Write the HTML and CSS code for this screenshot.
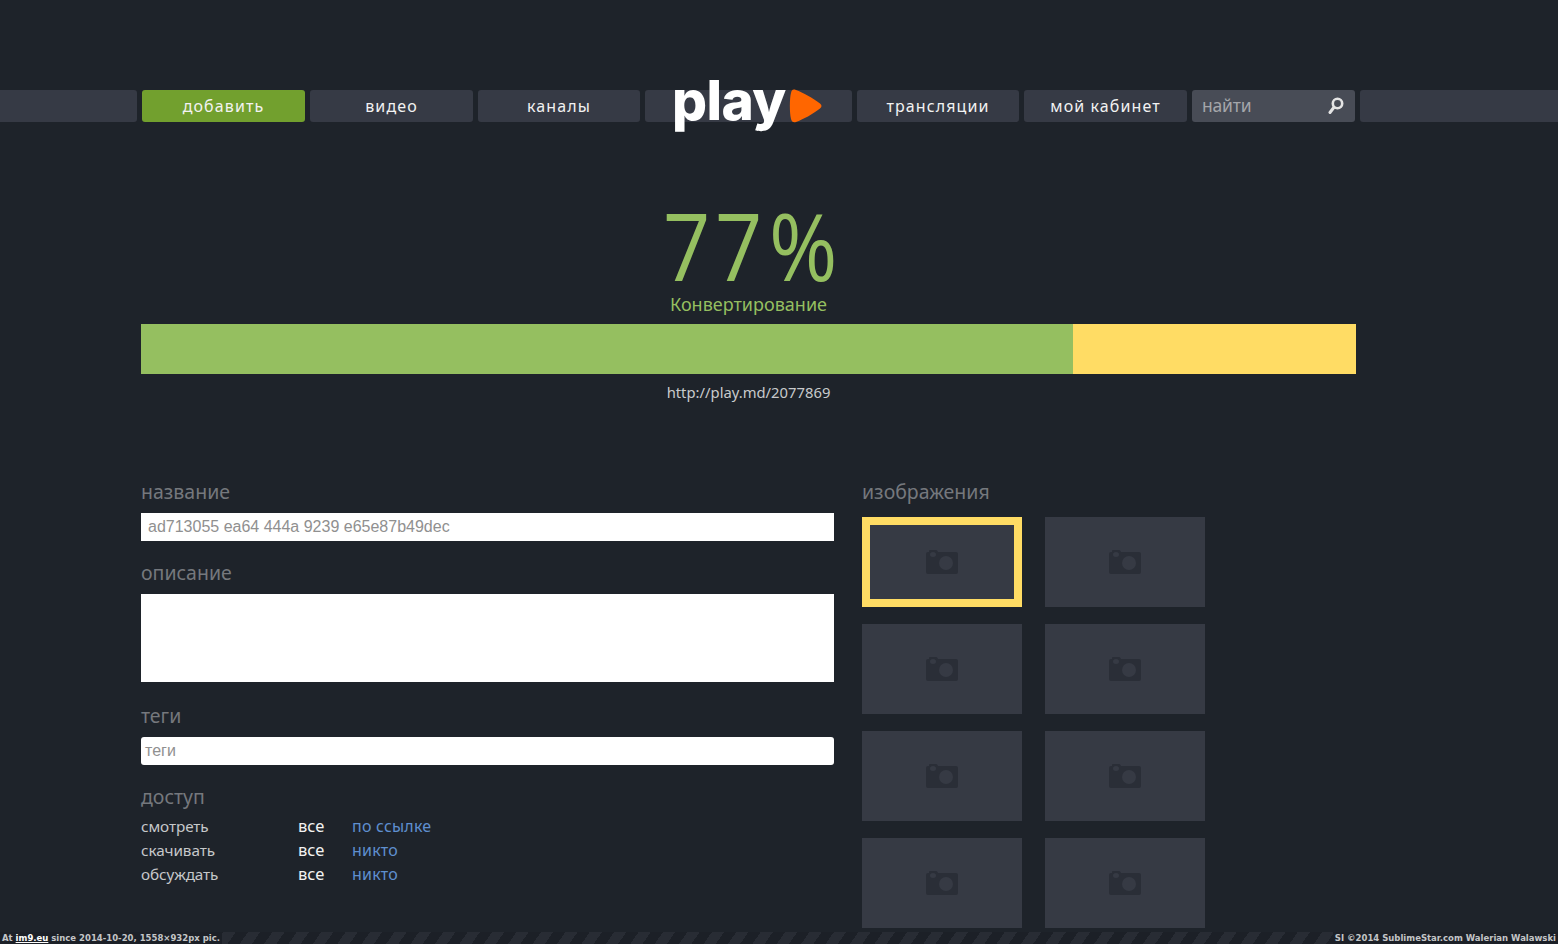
FILE: index.html
```html
<!DOCTYPE html>
<html lang="ru">
<head>
<meta charset="utf-8">
<title>play</title>
<link rel="stylesheet" href="styles.css">
</head>
<body>
<div class="page">
  <nav class="nav">
    <div class="nav-item nav-edge-left"></div>
    <a class="nav-item nav-add">добавить</a>
    <a class="nav-item">видео</a>
    <a class="nav-item">каналы</a>
    <div class="nav-item nav-logo-slot">
      <div class="logo">
        <span class="logo-text">play</span>
        <svg class="logo-mark" width="34" height="36" viewBox="0 0 34 36"><path d="M5 1.500 C3 1.500 2.500 3 2 5 C0.500 10 0.500 25 2 31 C2.500 33.500 4.500 35 7 34 C14 31.500 24 26 31 20.500 C33 19 33 17 31 15.500 C24 10 14 4.500 7 2 C6 1.600 5.500 1.500 5 1.500 Z" fill="#ff6600"/></svg>
      </div>
    </div>
    <a class="nav-item">трансляции</a>
    <a class="nav-item">мой кабинет</a>
    <div class="nav-item nav-search">
      <span class="search-text">найти</span>
      <svg class="search-icon" width="16" height="18" viewBox="0 0 16 18"><circle cx="9.500" cy="6.500" r="4.700" fill="none" stroke="#e4e4e4" stroke-width="2.600"/><path d="M5.800 10.500 L2 15.500" stroke="#e4e4e4" stroke-width="3" stroke-linecap="round"/></svg>
    </div>
    <div class="nav-item nav-edge-right"></div>
  </nav>

  <section class="progress">
    <div class="percent"><span class="digits">77</span><span class="sign">%</span></div>
    <div class="status">Конвертирование</div>
    <div class="bar"><div class="bar-fill" style="width:932px"></div></div>
    <div class="url">http://play.md/2077869</div>
  </section>

  <main class="content">
    <div class="form">
      <h2 class="label">название</h2>
      <div class="input input-title">ad713055 ea64 444a 9239 e65e87b49dec</div>
      <h2 class="label">описание</h2>
      <div class="textarea"></div>
      <h2 class="label">теги</h2>
      <div class="input input-tags">теги</div>
      <h2 class="label">доступ</h2>
      <div class="access">
        <span class="a-name">смотреть</span><span class="a-all">все</span><a class="a-link">по ссылке</a>
        <span class="a-name">скачивать</span><span class="a-all">все</span><a class="a-link">никто</a>
        <span class="a-name">обсуждать</span><span class="a-all">все</span><a class="a-link">никто</a>
      </div>
    </div>
    <div class="images">
      <h2 class="label">изображения</h2>
      <div class="grid">
        <div class="thumb thumb-active"><svg class="cam" viewBox="0 0 34 26"><use href="#cam"/></svg></div>
        <div class="thumb"><svg class="cam" viewBox="0 0 34 26"><use href="#cam"/></svg></div>
        <div class="thumb"><svg class="cam" viewBox="0 0 34 26"><use href="#cam"/></svg></div>
        <div class="thumb"><svg class="cam" viewBox="0 0 34 26"><use href="#cam"/></svg></div>
        <div class="thumb"><svg class="cam" viewBox="0 0 34 26"><use href="#cam"/></svg></div>
        <div class="thumb"><svg class="cam" viewBox="0 0 34 26"><use href="#cam"/></svg></div>
        <div class="thumb"><svg class="cam" viewBox="0 0 34 26"><use href="#cam"/></svg></div>
        <div class="thumb"><svg class="cam" viewBox="0 0 34 26"><use href="#cam"/></svg></div>
      </div>
    </div>
  </main>
</div>
<footer class="footer">
  <span class="foot-text">At <u class="foot-link">im9.eu</u> since 2014-10-20, 1558×932px pic.</span>
  <span class="foot-text">SI ©2014 SublimeStar.com Walerian Walawski</span>
</footer>
<svg class="defs" width="0" height="0"><defs><symbol id="cam" viewBox="0 0 34 26"><path fill-rule="evenodd" fill="#2a2e37" d="M3 3 H4 V2 Q4 1 5 1 H11 Q12 1 12.500 2 L13 3 H31 Q33 3 33 5 V23 Q33 25 31 25 H3 Q1 25 1 23 V5 Q1 3 3 3 Z M5 5.500 A3 2.500 0 1 0 11 5.500 A3 2.500 0 1 0 5 5.500 Z"/><circle cx="21" cy="14" r="7" fill="#363a44"/></symbol></defs></svg>
</body>
</html>
```
FILE: styles.css
```css
* { box-sizing: border-box; }
html, body { margin: 0; padding: 0; height: 100%; }
body {
  background: #1e232a;
  font-family: "Noto Sans", "Open Sans", sans-serif;
  overflow: hidden;
  position: relative;
}
.page { padding-top: 90px; }
.nav {
  display: grid;
  grid-template-columns: 137px 163px 163px 162px 207px 162px 163px 163px 198px;
  grid-template-rows: 32px;
  column-gap: 5px;
  height: 32px;
}
.nav-item {
  background: #363a45;
  border-radius: 3px;
  color: #f2f2f2;
  font-size: 16px;
  letter-spacing: 1.1px;
  line-height: 32px;
  text-align: center;
}
.nav-edge-left { border-radius: 0 3px 3px 0; }
.nav-edge-right { border-radius: 3px 0 0 3px; }
.nav-add { background: #72a02e; }
.nav-logo-slot { position: relative; }
.logo {
  position: absolute;
  left: 27px;
  top: -20px;
  display: flex;
  align-items: flex-start;
  line-height: 1;
}
.logo-text {
  font-family: "Inter", sans-serif;
  font-weight: 800;
  font-size: 55px;
  letter-spacing: -0.600px;
  color: #fff;
  line-height: 60px;
}
.logo-mark { margin-top: 18px; margin-left: 3px; }
.nav-search {
  background: #484c56;
  display: flex;
  align-items: center;
  justify-content: space-between;
  padding: 0 11px 0 10px;
  letter-spacing: 0;
}
.search-text {
  color: #a4a6aa;
  font-size: 17.500px;
  letter-spacing: -0.200px;
  line-height: 28px;
  margin-bottom: 2px;
}
.progress {
  margin: 0 202px 0 141px;
  text-align: center;
}
.percent {
  margin-top: 80px;
  font-size: 94px;
  font-weight: 400;
  font-family: "Open Sans", sans-serif;
  color: #95bf60;
  line-height: 87px;
  display: flex;
  justify-content: center;
}
.digits {
  width: 106px;
  letter-spacing: 5.300px;
  text-align: left;
  white-space: nowrap;
  transform: scaleX(0.880);
  transform-origin: left center;
}
.sign {
  width: 66px;
  text-align: left;
  transform: scaleX(0.880);
  transform-origin: left center;
}
.status {
  color: #95bf60;
  font-size: 18px;
  line-height: 24px;
  margin-top: 3px;
}
.bar { height: 50px; background: #ffdc64; margin-top: 8px; }
.bar-fill { height: 100%; background: #95bf60; }
.url {
  color: #c8cacc;
  font-size: 14.800px;
  line-height: 20px;
  margin-top: 8px;
}
.content {
  display: flex;
  margin: 77px 0 0 141px;
  column-gap: 28px;
}
.form { width: 693px; }
.label {
  margin: 0;
  font-size: 19.500px;
  font-weight: 400;
  color: #75787d;
  line-height: 26px;
}
.input {
  height: 28px;
  background: #fff;
  color: #909090;
  font-family: "Liberation Sans", Arial, sans-serif;
  font-size: 16px;
  line-height: 28px;
  margin: 8px 0 19px;
  padding-left: 7px;
}
.input-tags { border-radius: 3px; padding-left: 4px; margin-bottom: 19px; }
.textarea { height: 88px; background: #fff; margin: 8px 0 21px; }
.access {
  display: grid;
  grid-template-columns: 157px 54px 1fr;
  grid-auto-rows: 24px;
  margin-top: 4px;
  font-size: 15.300px;
  line-height: 24px;
}
.a-name { color: #c6c8ca; letter-spacing: -0.100px; }
.a-all { color: #f2f2f2; font-size: 16.500px; }
.a-link { color: #5f8fcf; font-size: 16px; letter-spacing: 0.200px; }
.images { width: 343px; }
.grid {
  display: grid;
  grid-template-columns: 160px 160px;
  grid-auto-rows: 90px;
  column-gap: 23px;
  row-gap: 17px;
  margin-top: 12px;
}
.thumb {
  background: #363a44;
  display: flex;
  align-items: center;
  justify-content: center;
}
.thumb-active { border: 8px solid #ffdc64; }
.cam { width: 34px; height: 26px; display: block; }
.footer {
  position: absolute;
  left: 0;
  right: 0;
  bottom: 0;
  height: 12px;
  display: flex;
  justify-content: space-between;
  background: repeating-linear-gradient(-55deg, #1c2027 0 10px, #282c34 10px 20px);
  color: #c4c6c8;
  font-family: "DejaVu Sans", sans-serif;
  font-size: 8.500px;
  font-weight: 700;
  line-height: 12px;
}
.foot-text { background: #1c2027; padding: 0 2px; }
.foot-link { color: #fff; }
.defs { position: absolute; }
```
